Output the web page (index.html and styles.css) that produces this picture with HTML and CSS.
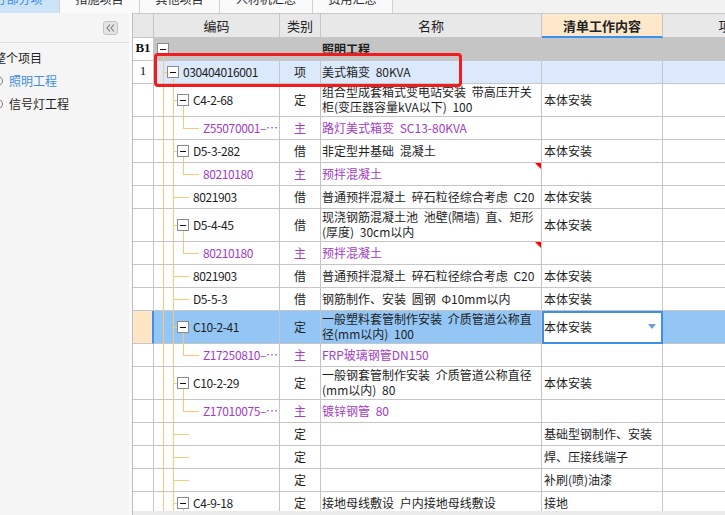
FILE: index.html
```html
<!DOCTYPE html>
<html lang="zh-CN">
<head>
<meta charset="utf-8">
<title>分部分项</title>
<link rel="stylesheet" href="styles.css">
</head>
<body>
<nav class="tabs">
  <div class="tab on"><span>分部分项</span></div>
  <div class="tab"><span>措施项目</span></div>
  <div class="tab"><span>其他项目</span></div>
  <div class="tab wide"><span>人材机汇总</span></div>
  <div class="tab"><span>费用汇总</span></div>
</nav>
<div class="main">
  <aside class="side">
    <div class="side-hd">
      <span class="collapse"><svg width="9" height="8" viewBox="0 0 9 8"><polyline points="4,0.5 1,4 4,7.5" fill="none" stroke="#7c7c7c" stroke-width="1.1"/><polyline points="8,0.5 5,4 8,7.5" fill="none" stroke="#7c7c7c" stroke-width="1.1"/></svg></span>
    </div>
    <ul class="tree">
      <li class="root">整个项目</li>
      <li class="node act"><span class="ic"></span>照明工程</li>
      <li class="node"><span class="ic"></span>信号灯工程</li>
    </ul>
  </aside>
  <div class="split"></div>
  <div class="gwrap">
    <div class="grid">
      <div class="row hd">
        <div class="c c0"></div>
        <div class="c c1">编码</div>
        <div class="c c2">类别</div>
        <div class="c c3">名称</div>
        <div class="c c4">清单工作内容</div>
        <div class="c c5">项目特征</div>
      </div>

      <div class="row gray">
        <div class="c c0 b">B1</div>
        <div class="c c1"><span class="bw"><span class="bx"></span></span></div>
        <div class="c c2"></div>
        <div class="c c3 b">照明工程</div>
        <div class="c c4"></div>
        <div class="c c5"></div>
      </div>

      <div class="row lb">
        <div class="c c0">1</div>
        <div class="c c1"><span class="t"></span><span class="bw"><span class="bx"></span></span><span class="tx">030404016001</span></div>
        <div class="c c2">项</div>
        <div class="c c3">美式箱变 80KVA</div>
        <div class="c c4"></div>
        <div class="c c5"></div>
      </div>

      <div class="row h2">
        <div class="c c0"></div>
        <div class="c c1"><span class="p"></span><span class="t"></span><span class="bw"><span class="bx"></span></span><span class="tx">C4-2-68</span></div>
        <div class="c c2">定</div>
        <div class="c c3"><span class="two">组合型成套箱式变电站安装 带高压开关<br>柜(变压器容量kVA以下) 100</span></div>
        <div class="c c4">本体安装</div>
        <div class="c c5"></div>
      </div>

      <div class="row pu">
        <div class="c c0"></div>
        <div class="c c1"><span class="p"></span><span class="p"></span><span class="e"></span><span class="lf"></span><span class="tx">Z55070001–…</span></div>
        <div class="c c2">主</div>
        <div class="c c3">路灯美式箱变 SC13-80KVA</div>
        <div class="c c4"></div>
        <div class="c c5"></div>
      </div>

      <div class="row">
        <div class="c c0"></div>
        <div class="c c1"><span class="p"></span><span class="t"></span><span class="bw"><span class="bx"></span></span><span class="tx">D5-3-282</span></div>
        <div class="c c2">借</div>
        <div class="c c3">非定型井基础 混凝土</div>
        <div class="c c4">本体安装</div>
        <div class="c c5"></div>
      </div>

      <div class="row pu">
        <div class="c c0"></div>
        <div class="c c1"><span class="p"></span><span class="p"></span><span class="e"></span><span class="lf"></span><span class="tx">80210180</span></div>
        <div class="c c2">主</div>
        <div class="c c3 mk">预拌混凝土</div>
        <div class="c c4"></div>
        <div class="c c5"></div>
      </div>

      <div class="row">
        <div class="c c0"></div>
        <div class="c c1"><span class="p"></span><span class="t"></span><span class="lf"></span><span class="tx">8021903</span></div>
        <div class="c c2">借</div>
        <div class="c c3">普通预拌混凝土 碎石粒径综合考虑 C20</div>
        <div class="c c4">本体安装</div>
        <div class="c c5"></div>
      </div>

      <div class="row h2">
        <div class="c c0"></div>
        <div class="c c1"><span class="p"></span><span class="t"></span><span class="bw"><span class="bx"></span></span><span class="tx">D5-4-45</span></div>
        <div class="c c2">借</div>
        <div class="c c3"><span class="two">现浇钢筋混凝土池 池壁(隔墙) 直、矩形<br>(厚度) 30cm以内</span></div>
        <div class="c c4">本体安装</div>
        <div class="c c5"></div>
      </div>

      <div class="row pu">
        <div class="c c0"></div>
        <div class="c c1"><span class="p"></span><span class="p"></span><span class="e"></span><span class="lf"></span><span class="tx">80210180</span></div>
        <div class="c c2">主</div>
        <div class="c c3 mk">预拌混凝土</div>
        <div class="c c4"></div>
        <div class="c c5"></div>
      </div>

      <div class="row">
        <div class="c c0"></div>
        <div class="c c1"><span class="p"></span><span class="t"></span><span class="lf"></span><span class="tx">8021903</span></div>
        <div class="c c2">借</div>
        <div class="c c3">普通预拌混凝土 碎石粒径综合考虑 C20</div>
        <div class="c c4">本体安装</div>
        <div class="c c5"></div>
      </div>

      <div class="row">
        <div class="c c0"></div>
        <div class="c c1"><span class="p"></span><span class="t"></span><span class="lf"></span><span class="tx">D5-5-3</span></div>
        <div class="c c2">借</div>
        <div class="c c3">钢筋制作、安装 圆钢 Φ10mm以内</div>
        <div class="c c4">本体安装</div>
        <div class="c c5"></div>
      </div>

      <div class="row h2 sel">
        <div class="c c0"></div>
        <div class="c c1"><span class="p"></span><span class="t"></span><span class="bw"><span class="bx"></span></span><span class="tx">C10-2-41</span></div>
        <div class="c c2">定</div>
        <div class="c c3"><span class="two">一般塑料套管制作安装 介质管道公称直<br>径(mm以内) 100</span></div>
        <div class="c c4 ed"><span>本体安装</span><span class="dd"></span></div>
        <div class="c c5"></div>
      </div>

      <div class="row pu">
        <div class="c c0"></div>
        <div class="c c1"><span class="p"></span><span class="p"></span><span class="e"></span><span class="lf"></span><span class="tx">Z17250810–…</span></div>
        <div class="c c2">主</div>
        <div class="c c3">FRP玻璃钢管DN150</div>
        <div class="c c4"></div>
        <div class="c c5"></div>
      </div>

      <div class="row h2">
        <div class="c c0"></div>
        <div class="c c1"><span class="p"></span><span class="t"></span><span class="bw"><span class="bx"></span></span><span class="tx">C10-2-29</span></div>
        <div class="c c2">定</div>
        <div class="c c3"><span class="two">一般钢套管制作安装 介质管道公称直径<br>(mm以内) 80</span></div>
        <div class="c c4">本体安装</div>
        <div class="c c5"></div>
      </div>

      <div class="row pu">
        <div class="c c0"></div>
        <div class="c c1"><span class="p"></span><span class="p"></span><span class="e"></span><span class="lf"></span><span class="tx">Z17010075–…</span></div>
        <div class="c c2">主</div>
        <div class="c c3">镀锌钢管 80</div>
        <div class="c c4"></div>
        <div class="c c5"></div>
      </div>

      <div class="row">
        <div class="c c0"></div>
        <div class="c c1"><span class="p"></span><span class="t"></span><span class="lf"></span></div>
        <div class="c c2">定</div>
        <div class="c c3"></div>
        <div class="c c4">基础型钢制作、安装</div>
        <div class="c c5"></div>
      </div>

      <div class="row">
        <div class="c c0"></div>
        <div class="c c1"><span class="p"></span><span class="t"></span><span class="lf"></span></div>
        <div class="c c2">定</div>
        <div class="c c3"></div>
        <div class="c c4">焊、压接线端子</div>
        <div class="c c5"></div>
      </div>

      <div class="row">
        <div class="c c0"></div>
        <div class="c c1"><span class="p"></span><span class="t"></span><span class="lf"></span></div>
        <div class="c c2">定</div>
        <div class="c c3"></div>
        <div class="c c4">补刷(喷)油漆</div>
        <div class="c c5"></div>
      </div>

      <div class="row">
        <div class="c c0"></div>
        <div class="c c1"><span class="p"></span><span class="t"></span><span class="bw"><span class="bx"></span></span><span class="tx">C4-9-18</span></div>
        <div class="c c2">定</div>
        <div class="c c3">接地母线敷设 户内接地母线敷设</div>
        <div class="c c4">接地</div>
        <div class="c c5"></div>
      </div>

      <div class="anno"></div>
    </div>
    <div class="gfoot"></div>
  </div>
</div>
</body>
</html>
```

FILE: styles.css
```css
* { box-sizing: border-box; margin: 0; padding: 0; }
html, body { width: 725px; height: 515px; overflow: hidden; }
body {
  background: #ececec;
  font-family: "Noto Sans CJK SC", "Noto Sans", sans-serif;
  font-size: 12px;
  color: #1e1e1e;
  --g: #fcc777;
  --line: #c6c6c6;
}

/* tabs */
.tabs { display: flex; height: 13px; overflow: hidden; background: #f2f2f2; }
.tab {
  flex: none; width: 80px; height: 13px;
  border-right: 1px solid #d2d2d2;
  background: #fafafa; color: #2b2b2b; text-align: center;
}
.tab span { display: block; line-height: 12px; margin-top: -7px; }
.tab.on { width: 82px; margin-left: -22px; background: #cde3f8; color: #3a8ee6; }
.tab.wide { width: 93px; }

/* layout */
.main { display: flex; height: 502px; }
.side { width: 129px; flex: none; background: #f5f5f5; }
.split { width: 3px; flex: none; background: #fafafa; }
.gwrap { flex: 1; min-width: 0; display: flex; flex-direction: column; }

/* side panel */
.side-hd {
  height: 30px; display: flex; align-items: center; justify-content: flex-end;
  padding-right: 11px; border-bottom: 1px solid #dcdcdc;
}
.collapse {
  width: 15px; height: 14px; border: 1px solid #c4c4c4; border-radius: 3px;
  background: #e4e4e4; display: flex; align-items: center; justify-content: center;
}
.tree { list-style: none; padding-top: 3px; }
.tree li { height: 23px; display: flex; align-items: center; white-space: nowrap; color: #1e1e1e; }
.tree .root { margin-left: -6px; }
.ic {
  flex: none; width: 10px; height: 10px; border: 1px solid #7d7d7d; border-radius: 50%;
  margin-left: -7px; margin-right: 6px;
}
.tree .act { color: #3d8de3; }

/* grid */
.grid {
  height: 498px; flex: none; position: relative; overflow: hidden; background: #fff;
  border-left: 1px solid #bdbdbd; border-top: 1px solid #c9c9c9;
}
.gfoot { flex: 1; background: #ebebeb; border-left: 1px solid #bdbdbd; }

.row { display: flex; height: 23px; width: max-content; }
.row.h2 { height: 33px; }
.c {
  flex: none; height: 100%; display: flex; align-items: center;
  border-right: 1px solid var(--line); border-bottom: 1px solid var(--line);
  overflow: hidden; white-space: nowrap;
}
.c0 { width: 21px; justify-content: center; font-family: "Liberation Serif", serif; font-size: 13px; color: #111; }
.c1 { width: 126px; align-items: stretch; padding-left: 3px; }
.c2 { width: 41px; justify-content: center; }
.c3 { width: 221px; padding-left: 1px; word-spacing: 3px; position: relative; }
.c4 { width: 121px; padding-left: 2px; }
.c5 { width: 164px; }
.c0, .c2, .c3, .c4 { padding-bottom: 2px; }

.hd { height: 24px; }
.hd .c { background: #e8e8e8; justify-content: center; align-items: center; padding-left: 0; padding-bottom: 0; font-size: 13px; color: #222; }
.hd .c4 { background: #fde8cb; border-bottom: 2px solid #3b8ff0; font-weight: bold; }

.gray .c:not(.c0) { background: #c5c5c5; }
.lb .c:not(.c0) { background: #dce8fb; }
.sel .c:not(.c0) { background: #93c6f5; }
.sel .c0 { background: #fde5c5; border-right: 2px solid #3f8ef0; }

.b { font-weight: bold; }
.pu { color: #a23dc4; }
.two { display: block; line-height: 15px; }

/* tree guides */
.tx { align-self: center; margin-left: 4px; margin-bottom: 2px; letter-spacing: -0.4px; }
.p, .t, .e { flex: none; width: 10px; }
.p { background: linear-gradient(var(--g), var(--g)) 6px 0 / 1px 100% no-repeat; }
.t {
  background:
    linear-gradient(var(--g), var(--g)) 6px 0 / 1px 100% no-repeat,
    linear-gradient(var(--g), var(--g)) 6px 50% / 4px 1px no-repeat;
}
.e {
  background:
    linear-gradient(var(--g), var(--g)) 6px 0 / 1px 50% no-repeat,
    linear-gradient(var(--g), var(--g)) 6px 50% / 4px 1px no-repeat;
}
.lf { flex: none; width: 12px; background: linear-gradient(var(--g), var(--g)) 0 50% / 100% 1px no-repeat; }
.bw { flex: none; width: 12px; display: flex; flex-direction: column; }
.bw::before { content: ""; flex: 1; }
.bw::after { content: ""; flex: 1; background: linear-gradient(var(--g), var(--g)) 6px 0 / 1px 100% no-repeat; }
.bx {
  flex: none; height: 12px; border: 1px solid #8a8a8a; background: #fff;
  display: flex; align-items: center; justify-content: center;
}
.bx::before { content: ""; width: 6px; height: 1px; background: #111; }

/* red corner marker */
.mk::after {
  content: ""; position: absolute; top: 0; right: 0;
  border-top: 6px solid #f00; border-left: 6px solid transparent;
}

/* in-cell editor */
.sel .c.ed {
  background: #fff; outline: 2px solid #3d8fe9; outline-offset: -2px;
  justify-content: space-between; padding-right: 6px;
}
.dd {
  width: 0; height: 0;
  border-left: 4px solid transparent; border-right: 4px solid transparent;
  border-top: 5px solid #6e9fd2;
}

/* red annotation frame */
.anno {
  position: absolute; left: 21px; top: 39px; width: 308px; height: 34px;
  border: 3px solid #ef1d1d; border-radius: 4px; pointer-events: none;
}
```
